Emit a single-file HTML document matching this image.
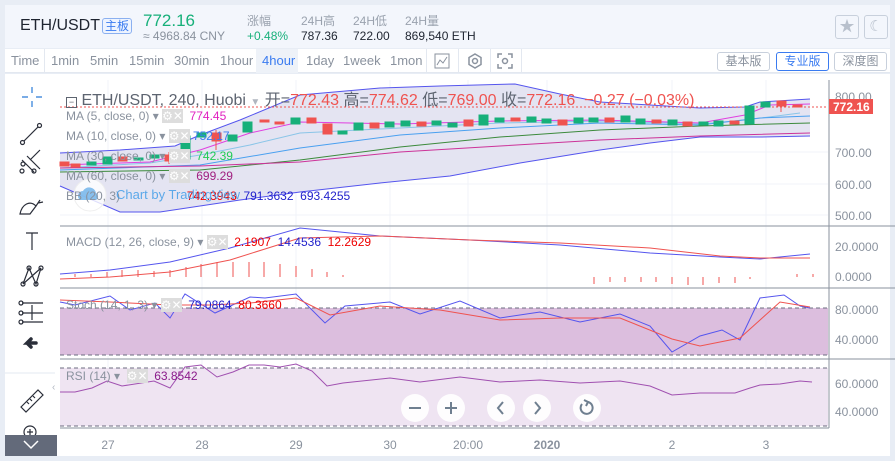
<!DOCTYPE html>
<html><head><meta charset="utf-8"><style>
*{margin:0;padding:0;box-sizing:border-box}
body{width:895px;height:461px;background:#e8edf5;font-family:"Liberation Sans","Noto Sans CJK SC",sans-serif;position:relative;overflow:hidden}
.hdr{position:absolute;left:5px;top:5px;width:885px;height:43px;background:#f3f6fc}
.t{position:absolute;white-space:nowrap}
.tb{position:absolute;left:5px;top:49px;width:885px;height:24px;background:#fff;border-bottom:1px solid #e3e8f0}
.tb span{position:absolute;top:4px;font-size:13px;color:#8a929e}
.vb{position:absolute;top:3px;height:19px;border:1px solid #c8d0dc;border-radius:3px;font-size:12px;color:#8a929e;text-align:center;line-height:17px}
.main{position:absolute;left:5px;top:74px;width:885px;height:382px;background:#fff}
</style></head><body>
<div class="hdr"></div>
<div class="t" style="left:20px;top:17px;font-size:16px;color:#1e2430">ETH/USDT</div>
<div class="t" style="left:102px;top:18px;font-size:12px;color:#3a7bf0;border:1px solid #8bb0f0;border-radius:3px;padding:0 2px;line-height:14px;background:#eef4ff">主板</div>
<div class="t" style="left:143px;top:11px;font-size:17px;color:#17b07a">772.16</div>
<div class="t" style="left:143px;top:29px;font-size:12px;color:#8a929e">≈ 4968.84 CNY</div>
<div class="t" style="left:247px;top:12px;font-size:12px;color:#9aa2ae">涨幅</div>
<div class="t" style="left:247px;top:29px;font-size:12px;color:#17b07a">+0.48%</div>
<div class="t" style="left:301px;top:12px;font-size:12px;color:#9aa2ae">24H高</div>
<div class="t" style="left:301px;top:29px;font-size:12px;color:#1e2430">787.36</div>
<div class="t" style="left:353px;top:12px;font-size:12px;color:#9aa2ae">24H低</div>
<div class="t" style="left:353px;top:29px;font-size:12px;color:#1e2430">722.00</div>
<div class="t" style="left:405px;top:12px;font-size:12px;color:#9aa2ae">24H量</div>
<div class="t" style="left:405px;top:29px;font-size:12px;color:#1e2430">869,540 ETH</div>
<div class="t" style="left:835px;top:15px;width:24px;height:24px;border:1px solid #c8d0dc;border-radius:3px;background:#f3f6fc;text-align:center;color:#b8c0cc;font-size:15px;line-height:22px">★</div>
<div class="t" style="left:864px;top:15px;width:24px;height:24px;border:1px solid #c8d0dc;border-radius:3px;background:#f3f6fc;text-align:center;color:#b8c0cc;font-size:15px;line-height:22px">☾</div>
<div class="tb">
<span style="left:6px">Time</span><div style="position:absolute;left:39px;top:0;width:1px;height:24px;background:#e3e8f0"></div>
<span style="left:46px">1min</span><span style="left:85px">5min</span><span style="left:124px">15min</span><span style="left:169px">30min</span><span style="left:215px">1hour</span>
<div style="position:absolute;left:251px;top:0;width:42px;height:24px;background:#eef2f8"></div>
<span style="left:257px;color:#3a7bf0">4hour</span><span style="left:301px">1day</span><span style="left:338px">1week</span><span style="left:385px">1mon</span>
<div style="position:absolute;left:421px;top:0;width:1px;height:24px;background:#e3e8f0"></div>
<div style="position:absolute;left:453px;top:0;width:1px;height:24px;background:#e3e8f0"></div>
<div style="position:absolute;left:485px;top:0;width:1px;height:24px;background:#e3e8f0"></div>
<div style="position:absolute;left:516px;top:0;width:1px;height:24px;background:#e3e8f0"></div>
<svg style="position:absolute;left:429px;top:4px" width="16" height="16"><rect x="1" y="1" width="14" height="14" fill="none" stroke="#8a929e"/><path d="M3 12 L6 7 L9 10 L13 4" fill="none" stroke="#8a929e"/></svg>
<svg style="position:absolute;left:461px;top:3px" width="18" height="18"><path d="M9 2 L15 5.5 L15 12.5 L9 16 L3 12.5 L3 5.5Z" fill="none" stroke="#8a929e" stroke-width="1.5"/><circle cx="9" cy="9" r="2.5" fill="none" stroke="#8a929e" stroke-width="1.5"/></svg>
<svg style="position:absolute;left:492px;top:4px" width="16" height="16"><path d="M1 5V1H5M11 1H15V5M15 11V15H11M5 15H1V11" fill="none" stroke="#8a929e" stroke-width="1.5"/><circle cx="8" cy="8" r="2.5" fill="none" stroke="#8a929e" stroke-width="1.5"/></svg>
<div class="vb" style="left:712px;width:53px">基本版</div>
<div class="vb" style="left:771px;width:53px;border-color:#3a7bf0;color:#3a7bf0">专业版</div>
<div class="vb" style="left:829px;width:53px">深度图</div>
</div>
<div class="main"></div>
<svg style="position:absolute;left:0;top:0" width="895" height="461" font-family="Liberation Sans, sans-serif">
<g stroke="#2a2e39" fill="none" stroke-width="1.2">
<path d="M32 87V93M32 101V107M22 97H28M36 97H42" stroke="#2a7bd8"/>
<path d="M24 141L38 127"/><circle cx="22.5" cy="142.5" r="2"/><circle cx="39.5" cy="125.5" r="2"/>
<path d="M22 160L34 172M27 156L40 169M30 160L40 150"/><circle cx="22" cy="171" r="2"/><circle cx="34" cy="171" r="2"/><circle cx="23" cy="164" r="2"/>
<path d="M20 214C22 204 30 200 36 206L30 214Z M36 206L40 200 M38 203L43 202"/>
<path d="M26 233H38M32 233V250"/>
<path d="M23 284L29 268L36 284L41 268 M23 284L41 268"/><circle cx="23" cy="284" r="2"/><circle cx="29" cy="268" r="2"/><circle cx="36" cy="284" r="2"/><circle cx="41" cy="268" r="2"/>
<path d="M22 303H43M22 313H43M22 322H43M32 305V320"/><circle cx="21" cy="303" r="2"/><circle cx="21" cy="313" r="2"/><circle cx="21" cy="322" r="2"/>
<path d="M21 407L38 390L43 395L26 412Z M27 402l2 2M30 399l2 2M33 396l2 2"/>
<circle cx="30" cy="432" r="6"/><path d="M27 432H33M30 429V435"/>
</g>
<path d="M36 343H27L31 339M27 343L31 347" stroke="#2a2e39" stroke-width="3.5" fill="none" stroke-linecap="round"/>
<line x1="5" y1="373" x2="55" y2="373" stroke="#e3e8f0"/>
<rect x="5" y="435" width="52" height="21" fill="#636a7a"/>
<path d="M24 441L31 448L38 441" stroke="#fff" stroke-width="1.5" fill="none"/>
<text x="52" y="390" font-size="10" fill="#b0b6c0">‹</text>
<g stroke="#f0f3f8"><line x1="108" y1="80" x2="108" y2="428"/><line x1="202" y1="80" x2="202" y2="428"/><line x1="296" y1="80" x2="296" y2="428"/><line x1="390" y1="80" x2="390" y2="428"/><line x1="468" y1="80" x2="468" y2="428"/><line x1="547" y1="80" x2="547" y2="428"/><line x1="672" y1="80" x2="672" y2="428"/><line x1="766" y1="80" x2="766" y2="428"/>
<line x1="60" y1="152" x2="828" y2="152"/><line x1="60" y1="184" x2="828" y2="184"/><line x1="60" y1="215" x2="828" y2="215"/></g>
<path d="M60 153L120 150L175 146L200 135L240 120L300 95L380 88L440 86L515 84L560 94L600 102L700 108L745 107L760 102L810 99L810 136L760 137L700 137L650 143L600 150L520 163L450 176L380 183L300 192L240 200L200 206L160 212L120 212L60 186Z" fill="#e4e4f2"/>
<path d="M60 153L120 150L175 146L200 135L240 120L300 95L380 88L440 86L515 84L560 94L600 102L700 108L745 107L760 102L810 99" stroke="#5555ee" fill="none"/>
<path d="M810 136L760 137L700 137L650 143L600 150L520 163L450 176L380 183L300 192L240 200L200 206L160 212L120 212L60 186" stroke="#5555ee" fill="none"/>
<path d="M60 168L150 163L200 155L250 145L300 133L400 128L500 123L600 121L700 124L745 120L800 113" stroke="#8ac5e8" fill="none"/>
<path d="M60 170L200 165L300 148L400 135L500 128L600 123L700 125L760 118L810 116" stroke="#4aa0f0" fill="none"/>
<path d="M60 172L200 170L300 160L400 147L500 137L600 130L700 126L810 123" stroke="#3c8a3c" fill="none"/>
<path d="M60 168L200 166L300 162L400 152L500 146L600 140L700 136L810 133" stroke="#cc3399" fill="none"/>
<path d="M60 165L150 162L200 150L250 133L300 122L400 124L500 121L600 120L700 123L745 115L770 105L810 104" stroke="#e040e0" fill="none"/>
<line x1="60" y1="107" x2="828" y2="107" stroke="#ef5350" stroke-dasharray="2,2"/>
<g stroke-width="1">
<g fill="#ef5350" stroke="#ef5350"><rect x="60" y="162" width="9" height="4"/><rect x="71" y="164" width="9" height="3"/><rect x="118" y="157" width="9" height="4"/><rect x="165" y="155" width="9" height="6"/><line x1="169" y1="152" x2="169" y2="164"/><rect x="212" y="133" width="9" height="8"/><line x1="216" y1="130" x2="216" y2="150"/><rect x="260" y="120" width="9" height="2"/><rect x="275" y="122" width="9" height="2"/><rect x="307" y="118" width="9" height="5"/><rect x="323" y="124" width="9" height="10"/><rect x="370" y="123" width="9" height="5"/><rect x="417" y="122" width="9" height="4"/><rect x="464" y="120" width="9" height="6"/><rect x="511" y="118" width="9" height="3"/><rect x="558" y="120" width="9" height="5"/><rect x="605" y="118" width="9" height="4"/><rect x="652" y="120" width="9" height="3"/><rect x="683" y="122" width="9" height="4"/><rect x="730" y="121" width="9" height="3"/><rect x="777" y="101" width="9" height="5"/><line x1="781" y1="101" x2="781" y2="112"/><rect x="793" y="105" width="9" height="2"/></g>
<g fill="#17b07a" stroke="#17b07a"><rect x="87" y="162" width="9" height="3"/><rect x="103" y="157" width="9" height="7"/><rect x="134" y="158" width="9" height="2"/><rect x="150" y="155" width="9" height="3"/><rect x="181" y="136" width="9" height="23"/><line x1="185" y1="130" x2="185" y2="163"/><rect x="197" y="133" width="9" height="4"/><rect x="228" y="135" width="9" height="6"/><rect x="243" y="122" width="9" height="10"/><rect x="291" y="118" width="9" height="6"/><rect x="338" y="131" width="9" height="3"/><rect x="354" y="123" width="9" height="7"/><rect x="385" y="122" width="9" height="5"/><rect x="401" y="121" width="9" height="5"/><rect x="432" y="121" width="9" height="4"/><rect x="448" y="123" width="9" height="4"/><rect x="479" y="115" width="9" height="10"/><rect x="495" y="118" width="9" height="4"/><rect x="527" y="117" width="9" height="5"/><rect x="542" y="119" width="9" height="4"/><rect x="574" y="118" width="9" height="5"/><rect x="589" y="118" width="9" height="4"/><rect x="621" y="116" width="9" height="6"/><rect x="636" y="119" width="9" height="5"/><rect x="668" y="120" width="9" height="5"/><rect x="699" y="122" width="9" height="3"/><rect x="714" y="121" width="9" height="5"/><rect x="745" y="106" width="9" height="18"/><rect x="761" y="102" width="9" height="5"/></g>
</g>
<line x1="829" y1="80" x2="829" y2="428" stroke="#8a929e"/>
<g font-size="12" fill="#8a929e"><text x="835" y="101">800.00</text><text x="835" y="157">700.00</text><text x="835" y="189">600.00</text><text x="835" y="220">500.00</text>
<text x="835" y="251">20.0000</text><text x="835" y="281">0.0000</text><text x="835" y="314">80.0000</text><text x="835" y="344">40.0000</text><text x="835" y="388">60.0000</text><text x="835" y="416">40.0000</text></g>
<rect x="829" y="99" width="44" height="15" fill="#ef5350"/><text x="833" y="111" font-size="12" fill="#fff" font-weight="bold">772.16</text>
<g stroke="#8a929e"><line x1="60" y1="226" x2="895" y2="226"/><line x1="60" y1="288" x2="895" y2="288"/><line x1="60" y1="359" x2="895" y2="359"/><line x1="60" y1="428" x2="829" y2="428"/></g>
<path d="M60 274L110 270L170 262L230 248L300 228L380 236L470 240L560 245L650 253L720 257L760 259L810 254" stroke="#5555ee" fill="none"/>
<path d="M60 279L110 277L170 272L230 260L300 238L380 236L470 240L560 243L650 248L720 256L760 258L810 258" stroke="#ef5350" fill="none"/>
<g stroke="#ef5350"><path d="M75 277V274M91 277V274M107 277V272M122 277V270M138 277V270M154 277V271M170 277V270M186 277V267M201 277V264M217 277V262M233 277V262M249 277V262M264 277V262M280 277V264M296 277V266M312 277V269M327 277V272M343 277V275M594 277V284M610 277V282M625 277V282M641 277V282M656 277V282M672 277V284M688 277V285M703 277V285M719 277V283M735 277V283M750 277V279M797 277V274M813 277V274"/></g>
<rect x="60" y="308" width="768" height="47" fill="#dcbede"/>
<g stroke="#6d6d80" stroke-dasharray="4,3"><line x1="60" y1="308" x2="828" y2="308"/><line x1="60" y1="355" x2="828" y2="355"/></g>
<path d="M60 302L75 305L110 296L130 310L155 303L170 318L185 294L215 313L250 297L265 298L296 294L325 323L345 306L390 302L420 314L460 301L500 318L540 312L580 322L620 314L650 326L672 352L700 336L722 330L740 340L760 298L784 295L800 306L810 308" stroke="#5555ee" fill="none"/>
<path d="M60 300L110 302L170 305L210 305L250 303L296 298L330 315L380 306L440 310L500 320L560 318L620 318L672 339L700 346L740 338L780 302L810 307" stroke="#ef5350" fill="none"/>
<rect x="60" y="368" width="768" height="58" fill="#efe4f2"/>
<g stroke="#6d6d80" stroke-dasharray="4,3"><line x1="60" y1="368" x2="828" y2="368"/><line x1="60" y1="426" x2="828" y2="426"/></g>
<path d="M60 392L75 392L92 388L107 381L122 386L154 381L170 388L185 367L201 365L217 377L233 372L249 365L264 365L280 367L296 364L312 371L327 386L343 383L390 378L420 382L460 377L500 382L540 380L580 383L620 381L650 386L672 395L700 393L735 393L750 388L760 385L780 384L800 381L812 382" stroke="#a050b0" fill="none"/>
<g font-size="12" fill="#8a929e" text-anchor="middle"><text x="108" y="449">27</text><text x="202" y="449">28</text><text x="296" y="449">29</text><text x="390" y="449">30</text><text x="468" y="449">20:00</text><text x="547" y="449" font-weight="bold">2020</text><text x="672" y="449">2</text><text x="766" y="449">3</text></g>
<g fill="#fff" fill-opacity="0.9"><circle cx="415" cy="408" r="14"/><circle cx="451" cy="408" r="14"/><circle cx="501" cy="408" r="14"/><circle cx="537" cy="408" r="14"/><circle cx="587" cy="408" r="14"/></g>
<g stroke="#6f7f90" stroke-width="2" fill="none"><path d="M409 408H421M445 408H457M451 402V414M503 402L498 408L503 414M535 402L540 408L535 414M582 404A6 6 0 1 0 588 402"/><path d="M584 400L588 402L586 406"/></g>
<circle cx="90" cy="195" r="16" fill="#fff" fill-opacity="0.8" stroke="#eee"/>
<path d="M80 200a5 5 0 0 1 3-9a7 7 0 0 1 13 2a4 4 0 0 1 0 7z" fill="#6ab0e8" opacity="0.8"/>
</svg>
<div style="position:absolute;left:66px;top:86px;font-size:16px;color:#5d6470;white-space:nowrap;font-family:'Liberation Sans','Noto Sans CJK SC',sans-serif">
<span style="display:inline-block;width:11px;height:11px;border:1px solid #5d6470;vertical-align:0px;font-size:9px;line-height:8px;text-align:center">−</span> ETH/USDT, 240, Huobi <span style="color:#b0b6c0;font-size:10px">▼</span> 开=<span style="color:#ef5350">772.43</span> 高=<span style="color:#ef5350">774.62</span> 低=<span style="color:#ef5350">769.00</span> 收=<span style="color:#ef5350">772.16 &nbsp;−0.27 (−0.03%)</span></div>
<div style="font-size:12px;white-space:nowrap;color:#8a929e">
<div class="t" style="left:66px;top:109px">MA (5, close, 0) ▾ <span style="background:#ddd;color:#fff">⚙✕</span> &nbsp;<span style="color:#e020c0">774.45</span></div>
<div class="t" style="left:66px;top:129px">MA (10, close, 0) ▾ <span style="background:#ddd;color:#fff">⚙✕</span> <span style="color:#3a7bf0">752.17</span></div>
<div class="t" style="left:66px;top:149px">MA (30, close, 0) ▾ <span style="background:#ddd;color:#fff">⚙✕</span> &nbsp;<span style="color:#22cc55">742.39</span></div>
<div class="t" style="left:66px;top:169px">MA (60, close, 0) ▾ <span style="background:#ddd;color:#fff">⚙✕</span> &nbsp;<span style="color:#a02080">699.29</span></div>
<div class="t" style="left:66px;top:189px">BB (20, 3) &nbsp;&nbsp;&nbsp;&nbsp;&nbsp;&nbsp;&nbsp;&nbsp;&nbsp;&nbsp;&nbsp;&nbsp;&nbsp;&nbsp;&nbsp;&nbsp;&nbsp;&nbsp; <span style="color:#e00">742.3943</span> &nbsp;<span style="color:#2222cc">791.3632 &nbsp;693.4255</span></div>
<div class="t" style="left:116px;top:187px;color:#3a9ae8;font-size:13px;opacity:.8">Chart by TradingView</div>
<div class="t" style="left:66px;top:235px">MACD (12, 26, close, 9) ▾ <span style="background:#ddd;color:#fff">⚙✕</span> &nbsp;<span style="color:#e00">2.1907</span> &nbsp;<span style="color:#2222cc">14.4536</span> &nbsp;<span style="color:#e00">12.2629</span></div>
<div class="t" style="left:66px;top:298px">Stoch (14, 1, 3) ▾ <span style="background:#ddd;color:#fff">⚙✕</span> &nbsp;<span style="color:#2222cc">79.0864</span> &nbsp;<span style="color:#e00">80.3660</span></div>
<div class="t" style="left:66px;top:369px">RSI (14) ▾ &nbsp;<span style="background:#ddd;color:#fff">⚙✕</span> &nbsp;<span style="color:#8a1a8a">63.8542</span></div>
</div>
</body></html>
